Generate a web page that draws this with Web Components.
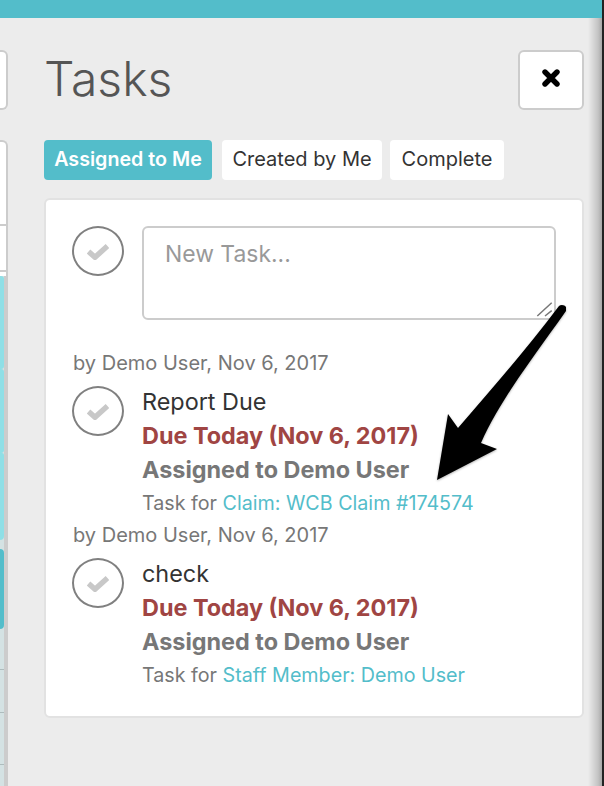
<!DOCTYPE html>
<html>
<head>
<meta charset="utf-8">
<style>
  html, body { margin: 0; height: 786px; overflow: hidden; background: #ececec; }
  body { font-family: "Inter", "Liberation Sans", sans-serif; }
</style>
</head>
<body>
<tasks-screen>
  <side-rail slot="rail"></side-rail>
  <tasks-panel slot="panel"></tasks-panel>
</tasks-screen>

<script>
const screenTemplate = document.createElement('template');
screenTemplate.innerHTML = `
<style>
  :host { display: block; height: 786px; width: 604px; position: relative; overflow: hidden; background: linear-gradient(to right, #ececec 0, #ececec 588px, #dcdcdc 592px, #c4c4c4 598px, #a8a8a8 602px, #222 602px); }
  .bar { height: 18px; background: #53bdca; margin-right: 2px; }
  .body { display: flex; height: 768px; padding-right: 20px; }
  svg.arrow { position: absolute; left: 0; top: 0; pointer-events: none; filter: drop-shadow(0 1px 1px rgba(0,0,0,.3)); }
</style>
<div class="bar"></div>
<div class="body">
  <slot name="rail"></slot>
  <slot name="panel"></slot>
</div>
<svg class="arrow" width="604" height="786" viewBox="0 0 604 786">
  <path d="M566 307 C565 305 561 304 559 306 C530 345 495 385 458 428 L448 414 L437 480 L497 449 L481 443 C500 400 535 355 566 311 Z" fill="#000"/>
</svg>
`;

class TasksScreen extends HTMLElement {
  constructor() {
    super();
    this.attachShadow({ mode: 'open' });
    this.shadowRoot.appendChild(screenTemplate.content.cloneNode(true));
  }
}

const railTemplate = document.createElement('template');
railTemplate.innerHTML = `
<style>
  :host { display: block; width: 8px; flex: none; }
  .col { display: flex; flex-direction: column; height: 100%; }
  .box {
    background: #fff;
    border: 2px solid #ccc;
    border-left: 0;
    border-radius: 0 6px 6px 0;
    box-sizing: border-box;
    width: 8px;
  }
  .top { height: 60px; margin-top: 32px; }
  .list {
    margin-top: 30px;
    flex: 1;
    border-bottom: 0;
    border-radius: 0 6px 0 0;
    display: flex;
    flex-direction: column;
    overflow: hidden;
  }
  .line { height: 2px; background: #ccc; flex: none; }
  .rows { flex: 1; background: #d4e2e3; display: flex; flex-direction: column; border-right: 2px solid #ccc; }
  .teal { width: 4px; flex: none; background: #8fdfe6; }
  .rows .line { height: 1px; background: #aebcbd; }
</style>
<div class="col">
  <div class="box top"></div>
  <div class="box list">
    <div style="height:82px"></div>
    <div class="line"></div>
    <div style="height:44px"></div>
    <div class="line"></div>
    <div style="height:4px"></div>
    <div class="rows">
      <div class="teal" style="height:93px;border-radius:0 3px 3px 0"></div>
      <div class="teal" style="height:84px;border-radius:0 3px 3px 0"></div>
      <div class="teal" style="height:87px;border-radius:0 3px 6px 0"></div>
      <div class="teal" style="height:80px;margin-top:9px;background:#53bdca;border-radius:0 6px 6px 0"></div>
      <div class="line" style="margin-top:40px"></div>
      <div class="line" style="margin-top:42px"></div>
      <div class="line" style="margin-top:51px"></div>
    </div>
  </div>
</div>
`;

class SideRail extends HTMLElement {
  constructor() {
    super();
    this.attachShadow({ mode: 'open' });
    this.shadowRoot.appendChild(railTemplate.content.cloneNode(true));
  }
}

const checkTemplate = document.createElement('template');
checkTemplate.innerHTML = `
<style>
  :host {
    display: flex;
    flex: none;
    width: 52px;
    height: 50px;
    box-sizing: border-box;
    border: 2px solid #808080;
    border-radius: 50%;
    background: #fff;
    align-items: center;
    justify-content: center;
  }
  svg { display: block; }
</style>
<svg width="22" height="18" viewBox="0 0 22 18">
  <path d="M1.5 9.5 L8 15.2 L20.5 4" fill="none" stroke="#c8c8c8" stroke-width="5.5" stroke-linejoin="miter"/>
</svg>
`;

class TaskCheck extends HTMLElement {
  constructor() {
    super();
    this.attachShadow({ mode: 'open' });
    this.shadowRoot.appendChild(checkTemplate.content.cloneNode(true));
  }
}

const itemTemplate = document.createElement('template');
itemTemplate.innerHTML = `
<style>
  :host { display: block; }
  .by { font-size: 20px; line-height: 26px; color: #777; padding-left: 1px; }
  .row { display: flex; gap: 18px; margin-top: 10px; }
  .lines { display: flex; flex-direction: column; margin-top: -1px; }
  .name { font-size: 23.4px; line-height: 34px; color: #333; }
  .due { font-size: 23.4px; line-height: 34px; font-weight: 700; color: #a04543; }
  .who { font-size: 23.4px; line-height: 34px; font-weight: 700; color: #777; }
  .for { font-size: 19.7px; line-height: 32px; color: #777; height: 32px; margin-bottom: 3px; }
  .for span { color: #53bdca; }
</style>
<div class="by"><slot name="by"></slot></div>
<div class="row">
  <task-check></task-check>
  <div class="lines">
    <div class="name"><slot name="name"></slot></div>
    <div class="due"><slot name="due"></slot></div>
    <div class="who"><slot name="who"></slot></div>
    <div class="for">Task for <span><slot name="link"></slot></span></div>
  </div>
</div>
`;

class TaskItem extends HTMLElement {
  constructor() {
    super();
    this.attachShadow({ mode: 'open' });
    this.shadowRoot.appendChild(itemTemplate.content.cloneNode(true));
  }
}

const panelTemplate = document.createElement('template');
panelTemplate.innerHTML = `
<style>
  :host { display: block; flex: 1; min-width: 0; padding: 0 0 0 36px; position: relative; }
  .head { display: flex; justify-content: space-between; align-items: flex-start; padding-top: 32px; }
  h1 {
    margin: 0;
    font-size: 48px;
    line-height: 58px;
    font-weight: 300;
    color: #555;
  }
  .close {
    width: 66px;
    height: 60px;
    box-sizing: border-box;
    border: 2px solid #ccc;
    border-radius: 6px;
    background: #fff;
    display: flex;
    align-items: center;
    justify-content: center;
    padding-bottom: 4px;
  }
  .tabs { display: flex; margin-top: 30px; }
  .tab {
    height: 40px;
    box-sizing: border-box;
    background: #fff;
    border-radius: 4px;
    font-size: 20px;
    line-height: 38px;
    color: #333;
    text-align: center;
  }
  .tab.on { background: #53bdca; color: #fff; font-weight: 600; font-size: 19.7px; }
  .card {
    margin-top: 18px;
    height: 520px;
    box-sizing: border-box;
    background: #fff;
    border: 2px solid #e2e2e2;
    border-radius: 6px;
    padding: 26px 26px 0 26px;
  }
  .new { display: flex; gap: 18px; margin-bottom: 30px; }
  .box { position: relative; flex: 1; height: 94px; }
  textarea {
    display: block;
    width: 100%;
    height: 100%;
    box-sizing: border-box;
    border: 2px solid #ccc;
    border-radius: 6px;
    padding: 11px 21px;
    margin: 0;
    font: 22.9px/30px "Inter", "Liberation Sans", sans-serif;
    resize: none;
    outline: none;
    background: #fff;
  }
  textarea::placeholder { color: #999; opacity: 1; }
  .grip { position: absolute; right: 2px; bottom: 2px; display: block; }
  .list { display: flex; flex-direction: column; }
</style>
<div class="head">
  <h1>Tasks</h1>
  <div class="close">
    <svg width="18" height="18" viewBox="0 0 18 18">
      <path d="M3 3 L15 15 M15 3 L3 15" stroke="#000" stroke-width="5.4" stroke-linecap="round" fill="none"/>
    </svg>
  </div>
</div>
<div class="tabs">
  <div class="tab on" style="width:168px">Assigned to Me</div>
  <div class="tab" style="width:160px;margin-left:10px">Created by Me</div>
  <div class="tab" style="width:114px;margin-left:8px">Complete</div>
</div>
<div class="card">
  <div class="new">
    <task-check></task-check>
    <div class="box">
      <textarea placeholder="New Task..."></textarea>
      <svg class="grip" width="18" height="16" viewBox="0 0 18 16">
        <path d="M1.3 14 L15.7 .7 M9 14 L15.7 8.7" stroke="#777" stroke-width="1.5" fill="none"/>
      </svg>
    </div>
  </div>
  <div class="list"><slot></slot></div>
</div>
`;

class TasksPanel extends HTMLElement {
  constructor() {
    super();
    this.attachShadow({ mode: 'open' });
    this.shadowRoot.appendChild(panelTemplate.content.cloneNode(true));
  }
}

customElements.define('tasks-screen', TasksScreen);
customElements.define('side-rail', SideRail);
customElements.define('task-check', TaskCheck);
customElements.define('task-item', TaskItem);
customElements.define('tasks-panel', TasksPanel);

// the two tasks shown in the list
const tasks = [
  { name: 'Report Due', link: 'Claim: WCB Claim #174574' },
  { name: 'check', link: 'Staff Member: Demo User' }
];
const panel = document.querySelector('tasks-panel');
tasks.forEach(t => {
  const item = document.createElement('task-item');
  item.innerHTML = `
    <span slot="by">by Demo User, Nov 6, 2017</span>
    <span slot="name">${t.name}</span>
    <span slot="due">Due Today (Nov 6, 2017)</span>
    <span slot="who">Assigned to Demo User</span>
    <span slot="link">${t.link}</span>`;
  panel.appendChild(item);
});
</script>
</body>
</html>
